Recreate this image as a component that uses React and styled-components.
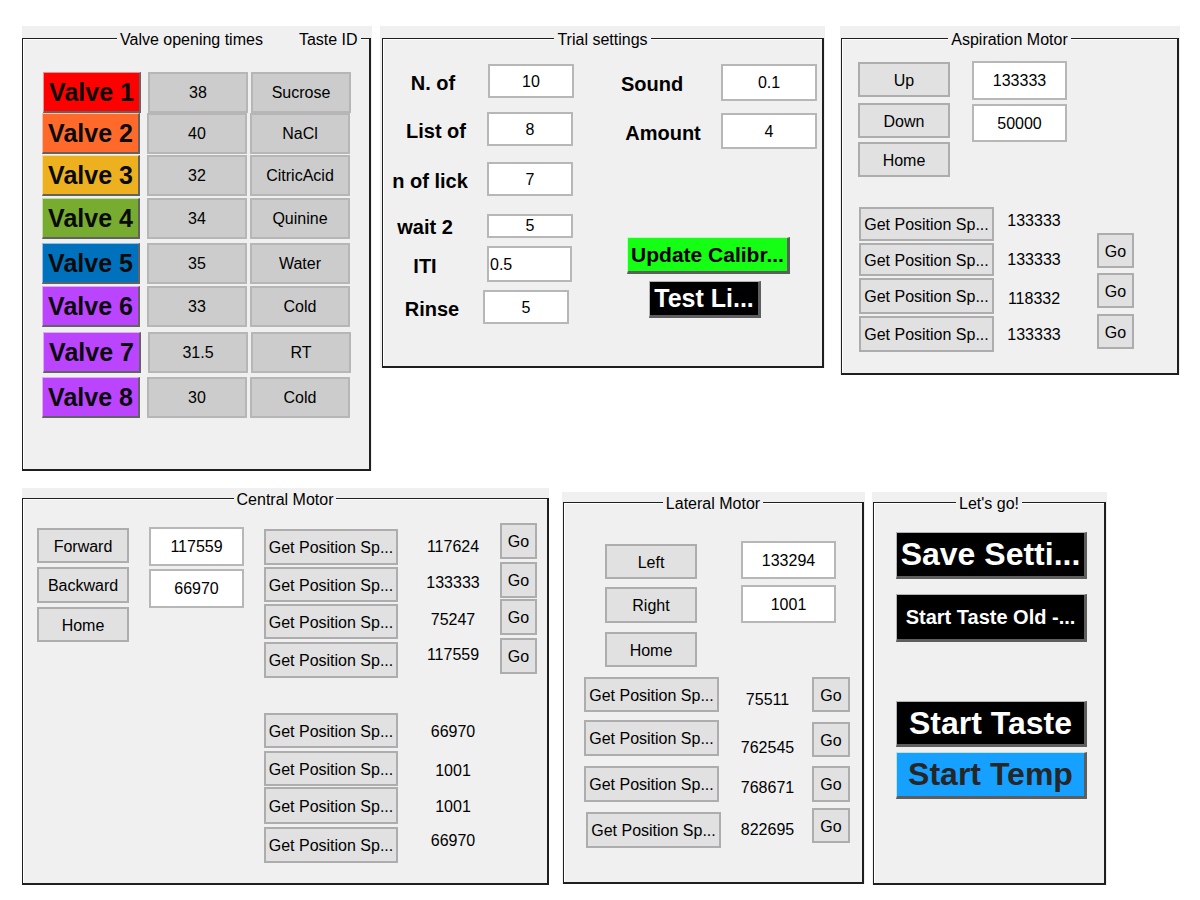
import React from "react";
import styled, { createGlobalStyle } from "styled-components";

const GlobalStyle = createGlobalStyle`
  html, body {
    margin: 0;
    padding: 0;
    background: #ffffff;
  }
  body {
    font-family: "Liberation Sans", Arial, sans-serif;
    color: #000;
  }
  * {
    box-sizing: border-box;
  }
`;

const Screen = styled.div`
  width: 1200px;
  height: 900px;
  padding: 26px 0 0 22px;
  overflow: hidden;
`;

const PanelRow = styled.div`
  display: flex;
  align-items: flex-start;
  margin-top: ${(p) => p.$mt || 0}px;
`;

const Shell = styled.div`
  flex: none;
  background: #f0f0f0;
  margin-left: ${(p) => p.$ml || 0}px;
  margin-top: ${(p) => p.$mt || 0}px;
  padding: ${(p) => p.$pt}px ${(p) => p.$pr || 0}px 0 ${(p) => p.$pl || 0}px;
`;

const Frame = styled.div`
  position: relative;
  width: ${(p) => p.$w}px;
  height: ${(p) => p.$h}px;
  border: 1px solid #1f1f1f;
  border-right-width: 2px;
  border-bottom-width: 2px;
  box-shadow: inset 1px 1px 0 #ffffff;
`;

const Title = styled.div`
  position: absolute;
  top: -8px;
  left: ${(p) => (p.$left != null ? `${p.$left}px` : "0")};
  right: ${(p) => (p.$left != null ? "auto" : "0")};
  margin: 0 auto;
  width: max-content;
  display: flex;
  gap: ${(p) => p.$gap || 0}px;
  padding: 0 3px;
  background: #f0f0f0;
  font-size: 16px;
  line-height: 18px;
  white-space: nowrap;
`;

const Body = styled.div`
  display: flex;
  align-items: flex-start;
  margin-top: ${(p) => p.$mt || 0}px;
`;

const Stack = styled.div`
  flex: none;
  display: flex;
  flex-direction: column;
  align-items: flex-start;
  width: ${(p) => (p.$w ? `${p.$w}px` : "auto")};
  margin-left: ${(p) => p.$ml || 0}px;
  margin-top: ${(p) => p.$mt || 0}px;
  padding-left: ${(p) => p.$pl || 0}px;
`;

const Push = styled.button`
  flex: none;
  display: flex;
  align-items: center;
  justify-content: center;
  width: ${(p) => p.$w}px;
  height: ${(p) => p.$h}px;
  margin: ${(p) => p.$mt || 0}px 0 0 ${(p) => p.$ml || 0}px;
  padding: 2px 0 0;
  background: #e1e1e1;
  border: 2px solid #adadad;
  border-radius: 0;
  font-family: inherit;
  font-size: 16px;
  color: #000;
  white-space: nowrap;
  overflow: hidden;
`;

const Bold = styled.button`
  flex: none;
  display: flex;
  align-items: center;
  justify-content: center;
  width: ${(p) => p.$w}px;
  height: ${(p) => p.$h}px;
  margin: ${(p) => p.$mt || 0}px 0 0 ${(p) => p.$ml || 0}px;
  padding: 0;
  background: ${(p) => p.$bg};
  color: ${(p) => p.$fg || "#000"};
  border-style: solid;
  border-width: 1px 3px 3px 1px;
  border-color: rgba(255, 255, 255, 0.7) #5e5e5e #5e5e5e rgba(255, 255, 255, 0.7);
  border-radius: 0;
  font-family: inherit;
  font-weight: bold;
  font-size: ${(p) => p.$fs}px;
  white-space: nowrap;
  overflow: hidden;
`;

const Edit = styled.input`
  flex: none;
  width: ${(p) => p.$w}px;
  height: ${(p) => p.$h}px;
  margin: ${(p) => p.$mt || 0}px 0 0 ${(p) => p.$ml || 0}px;
  padding: 1px 0 0 ${(p) => (p.$left ? "1px" : "0")};
  background: #ffffff;
  border: 2px solid #b7b7b7;
  border-radius: 0;
  outline: none;
  font-family: inherit;
  font-size: 16px;
  color: #000;
  text-align: ${(p) => (p.$left ? "left" : "center")};
`;

const Value = styled.div`
  flex: none;
  width: 100%;
  height: 20px;
  margin-top: ${(p) => p.$mt || 0}px;
  font-size: 16px;
  line-height: 20px;
  text-align: center;
  white-space: nowrap;
`;

/* valve table */

const ValveRow = styled.div`
  display: flex;
  height: 41px;
  margin-top: ${(p) => p.$mt}px;
  margin-left: ${(p) => p.$dx || 0}px;
`;

const ValveButton = styled(Bold)`
  width: 98px;
  height: 41px;
  margin: 0;
  border-width: 1px 2px 2px 1px;
  border-color: rgba(255, 255, 255, 0.55) #626262 #626262 rgba(255, 255, 255, 0.55);
  color: #0a0a0a;
`;

const Cell = styled.div`
  flex: none;
  display: flex;
  align-items: center;
  justify-content: center;
  width: 100px;
  height: 41px;
  margin-left: ${(p) => p.$ml}px;
  padding-top: 1px;
  background: #cccccc;
  border: 2px solid #b6b6b6;
  font-size: 16px;
`;

/* trial settings */

const FieldRow = styled.div`
  display: flex;
  align-items: center;
  margin-top: ${(p) => p.$mt}px;
`;

const FieldLabel = styled.div`
  flex: none;
  width: ${(p) => p.$w}px;
  margin-left: ${(p) => p.$ml || 0}px;
  padding-top: 4px;
  font-size: 20px;
  font-weight: bold;
  text-align: center;
  white-space: nowrap;
`;

const PURPLE = "#bb44fe";

const valves = [
  { n: 1, c: "#ff0000", t: "38", id: "Sucrose", mt: 33, dx: 1 },
  { n: 2, c: "#ff6a2a", t: "40", id: "NaCl", mt: 0 },
  { n: 3, c: "#edb120", t: "32", id: "CitricAcid", mt: 1 },
  { n: 4, c: "#77ac30", t: "34", id: "Quinine", mt: 2 },
  { n: 5, c: "#0072bd", t: "35", id: "Water", mt: 4 },
  { n: 6, c: PURPLE, t: "33", id: "Cold", mt: 2 },
  { n: 7, c: PURPLE, t: "31.5", id: "RT", mt: 5, dx: 1 },
  { n: 8, c: PURPLE, t: "30", id: "Cold", mt: 4 },
];

const trialLeft = [
  { l: "N. of", w: 90, v: "10", ml: 10, ew: 86, h: 34, mt: 25 },
  { l: "List of", w: 96, v: "8", ml: 3, ew: 86, h: 34, mt: 14 },
  { l: "n of lick", w: 84, v: "7", ml: 15, ew: 86, h: 34, mt: 16 },
  { l: "wait 2", w: 74, v: "5", ml: 25, ew: 86, h: 24, mt: 16 },
  { l: "ITI", w: 74, v: "0.5", ml: 25, ew: 85, h: 36, mt: 7, left: true },
  { l: "Rinse", w: 88, v: "5", ml: 7, ew: 86, h: 34, mt: 8 },
];

const GP = "Get Position Sp...";

function ValvePanel() {
  return (
    <Shell $pt={12} $pr={1}>
      <Frame $w={349} $h={433}>
        <Title $left={94} $gap={36}>
          <span>Valve opening times</span>
          <span>Taste ID</span>
        </Title>
        <Stack $ml={19}>
          {valves.map((v) => (
            <ValveRow key={v.n} $mt={v.mt} $dx={v.dx}>
              <ValveButton $bg={v.c} $fs={25}>
                Valve {v.n}
              </ValveButton>
              <Cell $ml={7}>{v.t}</Cell>
              <Cell $ml={3}>{v.id}</Cell>
            </ValveRow>
          ))}
        </Stack>
      </Frame>
    </Shell>
  );
}

function TrialPanel() {
  return (
    <Shell $ml={8} $pl={2} $pt={12} $pr={1}>
      <Frame $w={442} $h={330}>
        <Title>Trial settings</Title>
        <Body>
          <Stack $w={192}>
            {trialLeft.map((r) => (
              <FieldRow key={r.l} $mt={r.mt}>
                <FieldLabel $ml={5} $w={r.w}>
                  {r.l}
                </FieldLabel>
                <Edit
                  $ml={r.ml}
                  $w={r.ew}
                  $h={r.h}
                  $left={r.left}
                  defaultValue={r.v}
                  readOnly
                />
              </FieldRow>
            ))}
          </Stack>
          <Stack $ml={25} $w={217}>
            <FieldRow $mt={25}>
              <FieldLabel $ml={10} $w={84}>
                Sound
              </FieldLabel>
              <Edit $ml={27} $w={96} $h={37} defaultValue="0.1" readOnly />
            </FieldRow>
            <FieldRow $mt={12}>
              <FieldLabel $ml={10} $w={106}>
                Amount
              </FieldLabel>
              <Edit $ml={5} $w={96} $h={36} defaultValue="4" readOnly />
            </FieldRow>
            <Bold $ml={27} $mt={88} $w={163} $h={37} $bg="#14ff14" $fs={21}>
              Update Calibr...
            </Bold>
            <Bold $ml={49} $mt={7} $w={112} $h={37} $bg="#000" $fg="#fff" $fs={25}>
              Test Li...
            </Bold>
          </Stack>
        </Body>
      </Frame>
    </Shell>
  );
}

function AspirationPanel() {
  return (
    <Shell $ml={15} $pl={1} $pt={12} $pr={1}>
      <Frame $w={338} $h={337}>
        <Title>Aspiration Motor</Title>
        <Body $mt={22}>
          <Stack $ml={16}>
            <Push $w={92} $h={35} $mt={1}>Up</Push>
            <Push $w={92} $h={35} $mt={6}>Down</Push>
            <Push $w={92} $h={35} $mt={4}>Home</Push>
          </Stack>
          <Stack $ml={22}>
            <Edit $w={95} $h={39} defaultValue="133333" readOnly />
            <Edit $w={95} $h={38} $mt={4} defaultValue="50000" readOnly />
          </Stack>
        </Body>
        <Body $mt={30}>
          <Stack $ml={17} $w={135}>
            <Push $w={135} $h={34}>{GP}</Push>
            <Push $w={135} $h={33} $mt={2}>{GP}</Push>
            <Push $w={135} $h={36} $mt={2}>{GP}</Push>
            <Push $w={135} $h={36} $mt={2}>{GP}</Push>
          </Stack>
          <Stack $w={80}>
            <Value $mt={4}>133333</Value>
            <Value $mt={19}>133333</Value>
            <Value $mt={19}>118332</Value>
            <Value $mt={16}>133333</Value>
          </Stack>
          <Stack $ml={23}>
            <Push $w={37} $h={35} $mt={26}>Go</Push>
            <Push $w={37} $h={35} $mt={5}>Go</Push>
            <Push $w={37} $h={35} $mt={6}>Go</Push>
          </Stack>
        </Body>
      </Frame>
    </Shell>
  );
}

const centralPos = [
  { h: 36, mt: 0, v: "117624", vmt: 0 },
  { h: 35, mt: 2, v: "133333", vmt: 16 },
  { h: 35, mt: 2, v: "75247", vmt: 17 },
  { h: 36, mt: 3, v: "117559", vmt: 15 },
  { h: 35, mt: 35, v: "66970", vmt: 57 },
  { h: 35, mt: 3, v: "1001", vmt: 19 },
  { h: 37, mt: 1, v: "1001", vmt: 16 },
  { h: 36, mt: 3, v: "66970", vmt: 14 },
];

function CentralPanel() {
  return (
    <Shell $pt={10}>
      <Frame $w={527} $h={387}>
        <Title>Central Motor</Title>
        <Body>
          <Stack $ml={14} $mt={29}>
            <Push $w={92} $h={35}>Forward</Push>
            <Push $w={92} $h={36} $mt={4}>Backward</Push>
            <Push $w={92} $h={35} $mt={4}>Home</Push>
          </Stack>
          <Stack $ml={20} $mt={28}>
            <Edit $w={95} $h={39} defaultValue="117559" readOnly />
            <Edit $w={95} $h={39} $mt={3} defaultValue="66970" readOnly />
          </Stack>
          <Stack $ml={20} $mt={30} $w={134}>
            {centralPos.map((r, i) => (
              <Push key={i} $w={134} $h={r.h} $mt={r.mt}>
                {GP}
              </Push>
            ))}
          </Stack>
          <Stack $ml={10} $mt={38} $w={90}>
            {centralPos.map((r, i) => (
              <Value key={i} $mt={r.vmt}>
                {r.v}
              </Value>
            ))}
          </Stack>
          <Stack $ml={2} $mt={24}>
            <Push $w={37} $h={36}>Go</Push>
            <Push $w={37} $h={36} $mt={3}>Go</Push>
            <Push $w={37} $h={36} $mt={1}>Go</Push>
            <Push $w={37} $h={36} $mt={3}>Go</Push>
          </Stack>
        </Body>
      </Frame>
    </Shell>
  );
}

const lateralPos = [
  { h: 35, mt: 0, v: "75511", vmt: 13, gh: 35, gmt: 0 },
  { h: 36, mt: 8, v: "762545", vmt: 28, gh: 35, gmt: 10 },
  { h: 36, mt: 10, v: "768671", vmt: 20, gh: 36, gmt: 9 },
  { h: 36, mt: 10, v: "822695", vmt: 22, gh: 35, gmt: 6, ml: 2 },
];

function LateralPanel() {
  return (
    <Shell $ml={13} $mt={4} $pl={1} $pt={10} $pr={1}>
      <Frame $w={301} $h={382}>
        <Title>Lateral Motor</Title>
        <Body $mt={38}>
          <Stack $ml={41}>
            <Push $w={92} $h={35} $mt={3}>Left</Push>
            <Push $w={92} $h={36} $mt={8}>Right</Push>
            <Push $w={92} $h={35} $mt={9}>Home</Push>
          </Stack>
          <Stack $ml={44}>
            <Edit $w={95} $h={38} defaultValue="133294" readOnly />
            <Edit $w={95} $h={38} $mt={6} defaultValue="1001" readOnly />
          </Stack>
        </Body>
        <Body $mt={10}>
          <Stack $ml={20} $w={135}>
            {lateralPos.map((r, i) => (
              <Push key={i} $w={135} $h={r.h} $mt={r.mt} $ml={r.ml}>
                {GP}
              </Push>
            ))}
          </Stack>
          <Stack $w={93} $pl={4}>
            {lateralPos.map((r, i) => (
              <Value key={i} $mt={r.vmt}>
                {r.v}
              </Value>
            ))}
          </Stack>
          <Stack>
            {lateralPos.map((r, i) => (
              <Push key={i} $w={38} $h={r.gh} $mt={r.gmt}>
                Go
              </Push>
            ))}
          </Stack>
        </Body>
      </Frame>
    </Shell>
  );
}

function GoPanel() {
  return (
    <Shell $ml={7} $mt={4} $pl={1} $pt={10} $pr={1}>
      <Frame $w={233} $h={383}>
        <Title>Let's go!</Title>
        <Stack $ml={22} $mt={29}>
          <Bold $w={191} $h={47} $bg="#000" $fg="#fff" $fs={32}>
            Save Setti...
          </Bold>
          <Bold $w={191} $h={48} $mt={15} $bg="#000" $fg="#fff" $fs={20}>
            Start Taste Old -...
          </Bold>
          <Bold $w={191} $h={46} $mt={59} $bg="#000" $fg="#fff" $fs={32}>
            Start Taste
          </Bold>
          <Bold $w={191} $h={47} $mt={5} $bg="#16a0ff" $fg="#262626" $fs={32}>
            Start Temp
          </Bold>
        </Stack>
      </Frame>
    </Shell>
  );
}

export default function App() {
  return (
    <>
      <GlobalStyle />
      <Screen>
        <PanelRow>
          <ValvePanel />
          <TrialPanel />
          <AspirationPanel />
        </PanelRow>
        <PanelRow $mt={17}>
          <CentralPanel />
          <LateralPanel />
          <GoPanel />
        </PanelRow>
      </Screen>
    </>
  );
}
